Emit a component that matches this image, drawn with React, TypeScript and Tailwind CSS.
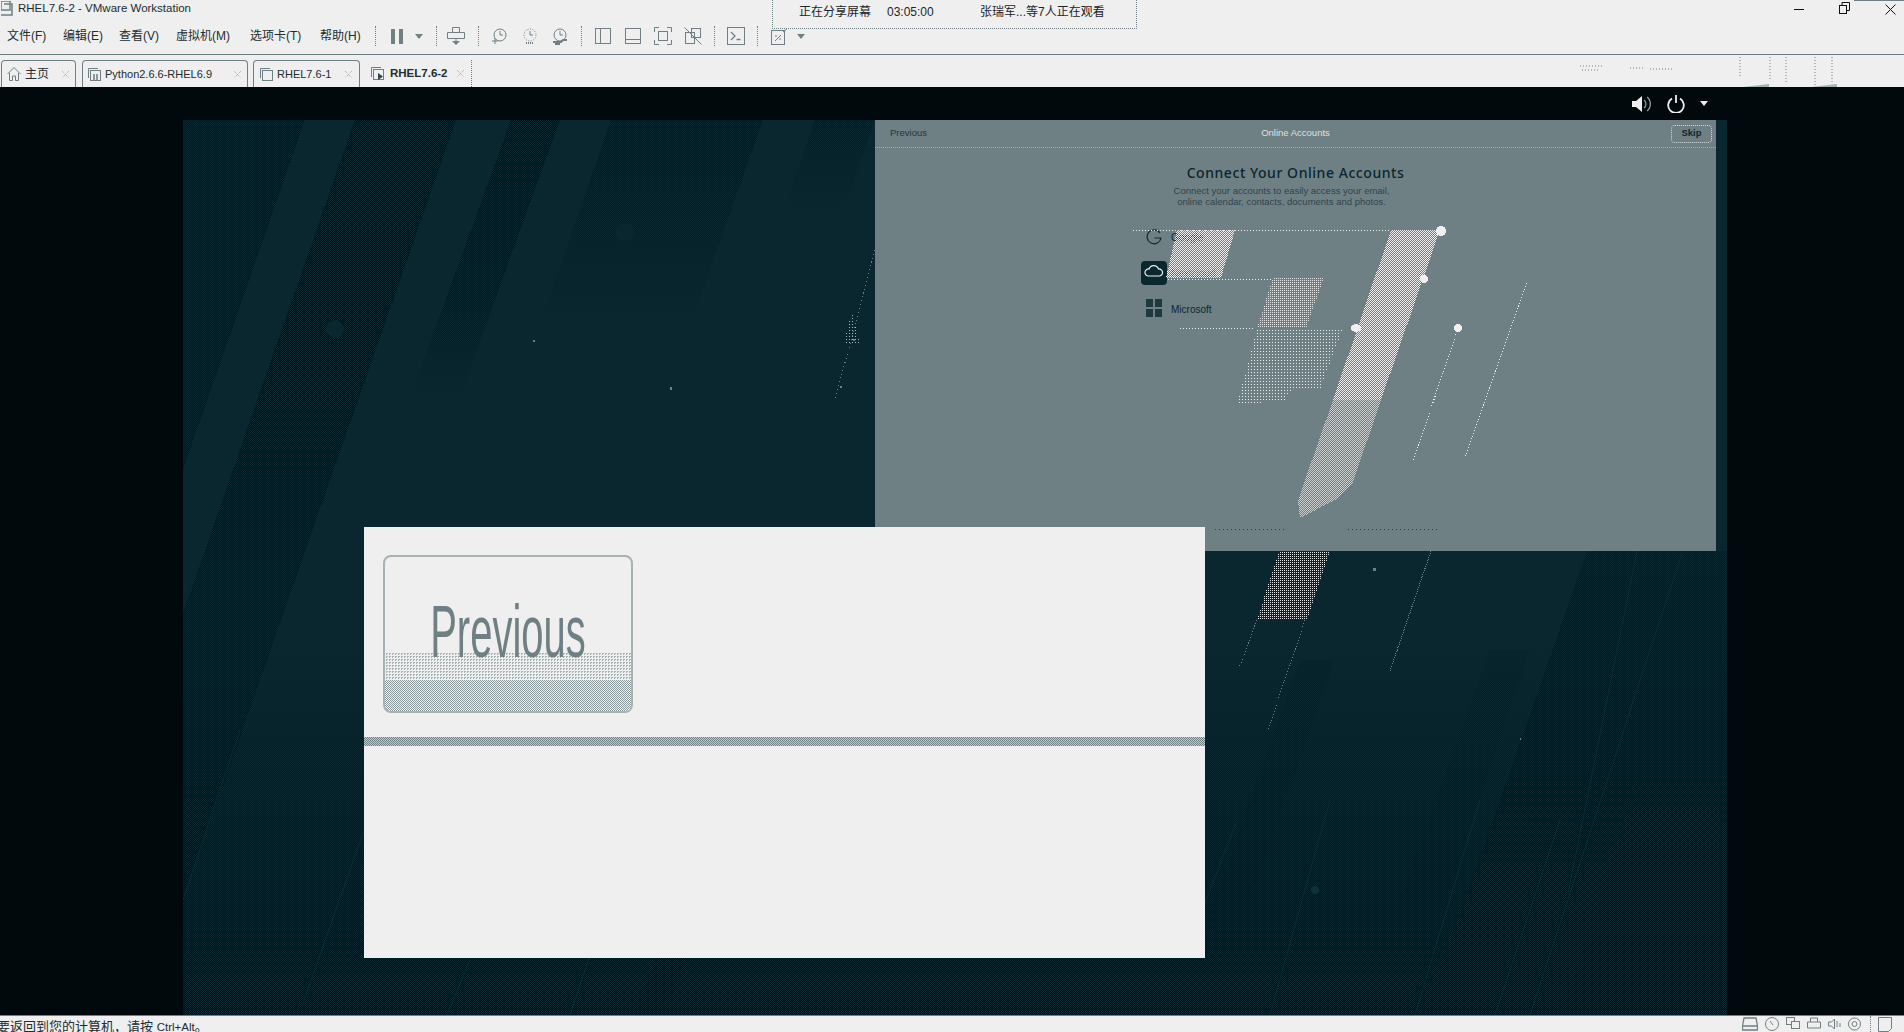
import React from "react";

const stroke = "#6f8084";

const menus = [
  { label: "文件(F)", width: "w-[56px]" },
  { label: "编辑(E)", width: "w-[56px]" },
  { label: "查看(V)", width: "w-[57px]" },
  { label: "虚拟机(M)", width: "w-[74px]" },
  { label: "选项卡(T)", width: "w-[70px]" },
  { label: "帮助(H)", width: "w-[55px]" },
];

const Sep = () => <div className="h-[20px] w-0 border-l border-dotted border-[#6f8084]" />;

const Caret = ({ color = stroke }: { color?: string }) => (
  <svg width="8" height="5" viewBox="0 0 8 5">
    <path d="M0 0h8L4 5z" fill={color} />
  </svg>
);

const Icon = ({ w = 18, h = 18, children }: { w?: number; h?: number; children: React.ReactNode }) => (
  <svg width={w} height={h} viewBox={`0 0 ${w} ${h}`} fill="none" stroke={stroke} strokeWidth="1" className="shrink-0">
    {children}
  </svg>
);

const Clock = ({ dashed = false, wrench = false }: { dashed?: boolean; wrench?: boolean }) => (
  <Icon w={16} h={17}>
    <circle cx="8" cy="7" r="6" strokeDasharray={dashed ? "1 1.5" : undefined} />
    <path d="M8 3v4h3" />
    {wrench ? <path d="M1 14h8l2-2h4M3 16h5" strokeWidth="2" /> : null}
    {!wrench && !dashed ? <path d="M0 13h6M3 10v6" /> : null}
    {dashed ? <path d="M4 15h8" strokeDasharray="1 1" strokeWidth="2" /> : null}
  </Icon>
);

const TabClose = () => (
  <svg width="9" height="9" viewBox="0 0 9 9" className="shrink-0" stroke="#9aa6a9" strokeDasharray="1 1">
    <path d="M1 1l7 7M8 1L1 8" />
  </svg>
);

// small window-stack glyph used on the vm tabs
const VmGlyph = ({ mark }: { mark?: "bars" | "play" }) => (
  <Icon w={15} h={15}>
    <path d="M1.5 11V1.5H11" />
    <rect x="3.5" y="3.5" width="10" height="10" />
    {mark === "bars" ? <path d="M7 7v6M10 7v6" strokeWidth="1.5" /> : null}
    {mark === "play" ? <path d="M8 7l5 3.5L8 14z" fill="#33464c" stroke="none" /> : null}
  </Icon>
);

const Wallpaper = () => (
  <svg className="absolute inset-0" width="1544" height="895" viewBox="183 120 1544 895" shapeRendering="crispEdges">
    <defs>
      <pattern id="checker" width="2" height="2" patternUnits="userSpaceOnUse">
        <rect width="1" height="1" fill="#0a262e" />
        <rect x="1" y="1" width="1" height="1" fill="#0a262e" />
      </pattern>
      <linearGradient id="g1" gradientUnits="userSpaceOnUse" x1="0" y1="120" x2="0" y2="1015">
        <stop offset="0" stopColor="#01090d" stopOpacity="0.9" />
        <stop offset="0.25" stopColor="#01090d" stopOpacity="1" />
        <stop offset="0.55" stopColor="#01090d" stopOpacity="0.55" />
        <stop offset="1" stopColor="#01090d" stopOpacity="0.85" />
      </linearGradient>
      <linearGradient id="g2" gradientUnits="userSpaceOnUse" x1="0" y1="120" x2="0" y2="400">
        <stop offset="0" stopColor="#01090d" stopOpacity="0.9" />
        <stop offset="0.6" stopColor="#01090d" stopOpacity="0.6" />
        <stop offset="1" stopColor="#01090d" stopOpacity="0" />
      </linearGradient>
      <linearGradient id="g3" gradientUnits="userSpaceOnUse" x1="0" y1="120" x2="0" y2="330">
        <stop offset="0" stopColor="#01090d" stopOpacity="0.65" />
        <stop offset="1" stopColor="#01090d" stopOpacity="0" />
      </linearGradient>
      <linearGradient id="g4" gradientUnits="userSpaceOnUse" x1="0" y1="120" x2="0" y2="215">
        <stop offset="0" stopColor="#01090d" stopOpacity="0.45" />
        <stop offset="1" stopColor="#01090d" stopOpacity="0" />
      </linearGradient>
      <linearGradient id="rise" gradientUnits="userSpaceOnUse" x1="0" y1="640" x2="0" y2="1015">
        <stop offset="0" stopColor="#01090d" stopOpacity="0" />
        <stop offset="0.6" stopColor="#01090d" stopOpacity="0.6" />
        <stop offset="1" stopColor="#01090d" stopOpacity="1" />
      </linearGradient>
      <linearGradient id="right" gradientUnits="userSpaceOnUse" x1="0" y1="551" x2="0" y2="1015">
        <stop offset="0" stopColor="#01090d" stopOpacity="0.45" />
        <stop offset="1" stopColor="#01090d" stopOpacity="0.9" />
      </linearGradient>
      <linearGradient id="edge" gradientUnits="userSpaceOnUse" x1="183" y1="0" x2="305" y2="0">
        <stop offset="0" stopColor="#01090d" stopOpacity="0.55" />
        <stop offset="1" stopColor="#01090d" stopOpacity="0.7" />
      </linearGradient>
    </defs>
    <rect x="183" y="120" width="1544" height="895" fill="#0a262e" />
    <polygon points="183,120 305,120 183,470" fill="url(#edge)" />
    <polygon points="355,120 456,120 143,1015 43,1015" fill="url(#g1)" />
    <polygon points="511,120 560,120 430,480 380,480" fill="url(#g2)" />
    <polygon points="611,120 763,120 650,440 500,440" fill="url(#g3)" />
    <polygon points="815,120 875,120 830,250 770,250" fill="url(#g4)" />
    <rect x="183" y="600" width="1544" height="415" fill="url(#rise)" />
    <polygon points="1587,551 1727,551 1727,1015 1425,1015" fill="url(#right)" />
    <polygon points="1490,650 1530,650 1445,900 1400,900" fill="#01090d" opacity="0.15" />
    <polygon points="1300,660 1335,660 1250,900 1215,900" fill="#01090d" opacity="0.2" />
    <polygon points="660,950 690,950 665,1015 632,1015" fill="#01090d" opacity="0.85" />
    <polygon points="1640,780 1727,780 1727,1015 1560,1015" fill="#01090d" opacity="0.3" />
    <rect x="183" y="120" width="1544" height="895" fill="url(#checker)" />
    <g stroke="#0d2d36" strokeWidth="1" shapeRendering="auto">
      <path d="M363 833L302 1006" />
      <path d="M1236 823L1205 903" />
      <path d="M1330 800L1270 1015" />
      <path d="M1637 551L1568 893" />
      <path d="M1682 553L1530 1015" />
      <path d="M1480 800L1415 1015" />
      <path d="M1560 820L1495 1015" />
      <path d="M240 730L183 900" />
      <path d="M470 960L447 1015" />
      <path d="M590 955L570 1015" />
    </g>
    <circle cx="1315" cy="890" r="4" fill="#0d3039" />
    <circle cx="625" cy="232" r="9" fill="#0a262e" />
    <circle cx="335" cy="329" r="9" fill="#0a262e" />
    {/* stray bright specks of the capture */}
    <g fill="#6f8084">
      <rect x="853" y="339" width="2" height="2" />
      <rect x="533" y="340" width="2" height="2" />
      <rect x="670" y="387" width="2" height="3" />
      <rect x="840" y="386" width="2" height="2" />
      <rect x="1373" y="568" width="3" height="3" />
      <rect x="1520" y="738" width="1" height="2" />
    </g>
  </svg>
);

// light dither streaks of the shared screen, they lie over the window content
const Streaks = () => (
  <svg
    className="absolute inset-0 pointer-events-none"
    width="1544"
    height="895"
    viewBox="183 120 1544 895"
    shapeRendering="crispEdges"
  >
    <defs>
      <pattern id="lite" width="2" height="2" patternUnits="userSpaceOnUse">
        <rect width="1" height="1" fill="#efefef" />
        <rect x="1" y="1" width="1" height="1" fill="#efefef" />
      </pattern>
      <pattern id="lite3" width="3" height="3" patternUnits="userSpaceOnUse">
        <rect width="1" height="1" fill="#efefef" />
      </pattern>
      <pattern id="lite2" width="2" height="2" patternUnits="userSpaceOnUse">
        <rect width="1" height="1" fill="#dfe3e4" />
      </pattern>
    </defs>
    <polygon points="1391,230 1440,230 1381,400 1333,400" fill="url(#lite)" />
    <polygon points="1333,400 1381,400 1353,482 1335,500 1300,518 1298,500" fill="url(#lite)" opacity="0.7" />
    <polygon points="1177,230 1235,230 1221,278 1166,278" fill="url(#lite)" />
    <polygon points="1273,278 1324,278 1306,328 1257,328" fill="url(#lite2)" />
    <polygon points="1257,330 1342,330 1320,390 1292,390 1285,400 1237,405" fill="url(#lite3)" />
    <polygon points="1279,551 1330,551 1307,620 1257,620" fill="url(#lite2)" />
    <g fill="#efefef">
      <ellipse cx="1441" cy="231" rx="5" ry="5" />
      <ellipse cx="1424" cy="279" rx="4" ry="4" />
      <ellipse cx="1356" cy="328" rx="5" ry="4" />
      <ellipse cx="1458" cy="328" rx="4" ry="4" />
    </g>
    <g stroke="#efefef" strokeWidth="1" strokeDasharray="1 2" fill="none">
      <path d="M1133 230H1391" />
      <path d="M1168 279H1273" />
      <path d="M1180 328H1255" />
      <path d="M1458 328L1413 462" />
      <path d="M1527 283L1465 458" />
      <path d="M1431 551L1390 671" strokeDasharray="1 1" stroke="#6f8084" />
      <path d="M1257 620L1239 668" stroke="#6f8084" />
      <path d="M1305 620L1268 730" stroke="#6f8084" />
      <path d="M875 250L835 400" stroke="#6f8084" strokeDasharray="1 3" />
    </g>
    <polygon points="852,312 860,345 843,345" fill="url(#lite3)" opacity="0.7" />
    <g stroke="#0a262e" strokeWidth="1" strokeDasharray="1 3" opacity="0.7">
      <path d="M1215 529H1285" />
      <path d="M1348 529H1440" />
    </g>
  </svg>
);

const OnlineAccounts = () => (
  <div className="absolute left-[692px] top-0 flex h-[431px] w-[841px] flex-col bg-[#6f8084] text-[#0a262e]">
    <div className="relative flex h-[28px] shrink-0 items-center justify-between border-b border-dotted border-[#a3aeb0] pl-[15px] pr-[4px] text-[9.5px]">
      <span className="opacity-80">Previous</span>
      <span className="absolute left-0 right-0 text-center text-[#dde1e2]">Online Accounts</span>
      <span className="flex h-[18px] w-[41px] items-center justify-center rounded-sm border border-dotted border-[#d5dadb] font-bold">Skip</span>
    </div>
    <div className="mt-[15px] text-center text-[14px] font-medium leading-[20px] tracking-[0.55px] [font-family:'Noto_Sans',sans-serif]">Connect Your Online Accounts</div>
    <div className="mt-[2px] pr-[28px] text-center text-[9.5px] leading-[11px] text-[#0a262e]/70">
      <div>Connect your accounts to easily access your email,</div>
      <div>online calendar, contacts, documents and photos.</div>
    </div>
    <div className="ml-[261px] mt-[12px] flex flex-col text-[10px]">
      <div className="flex h-[36px] items-center">
        <div className="flex w-[35px] justify-center">
          <svg width="16" height="17" viewBox="0 0 16 17" fill="none" stroke="#0a262e" strokeWidth="1.2">
            <path d="M14 4A7 7 0 1 0 15 9H8.5" />
          </svg>
        </div>
        <span>Google</span>
      </div>
      <div className="flex h-[36px] items-center">
        <div className="flex w-[35px] justify-center">
          <svg width="26" height="24" viewBox="0 0 26 24">
            <rect width="26" height="24" rx="4" fill="#0a262e" />
            <path d="M7 15a3.5 3.5 0 0 1 1-7 5 5 0 0 1 9.500 0 3.500 3.500 0 0 1 1 7z" fill="none" stroke="#efefef" strokeWidth="1.2" />
          </svg>
        </div>
        <span className="opacity-60">Nextcloud</span>
      </div>
      <div className="flex h-[36px] items-center">
        <div className="flex w-[35px] justify-center">
          <svg width="16" height="20" viewBox="0 0 16 20">
            <path d="M0 0h7v8H0zM9 0h7v8H9zM0 10h7v8H0zM9 10h7v8H9z" fill="#0a262e" opacity="0.8" />
          </svg>
        </div>
        <span>Microsoft</span>
      </div>
    </div>
  </div>
);

const PreviousPanel = () => (
  <div className="absolute left-[181px] top-[407px] flex h-[431px] w-[841px] flex-col bg-[#efefef]">
    <div className="h-[210px] shrink-0 pl-[19px] pt-[28px]">
      <div className="relative h-[158px] w-[250px] overflow-hidden rounded-[8px] border-2 border-[#a7b2b4]">
        <div className="absolute bottom-[31px] left-0 right-0 h-[27px] bg-[image:conic-gradient(#a7b2b4_25%,transparent_0)] bg-[size:3px_3px]" />
        <div className="absolute bottom-0 left-0 right-0 h-[31px] bg-[image:repeating-conic-gradient(#8b999c_0_25%,#efefef_0_50%)] bg-[size:2px_2px]" />
        <div className="relative flex h-[112px] items-end justify-center">
          <span className="origin-center scale-x-[0.54] text-[74px] leading-[74px] text-[#6f8084] whitespace-nowrap">Previous</span>
        </div>
      </div>
    </div>
    <div className="h-[9px] shrink-0 bg-[image:repeating-conic-gradient(#6f8084_0_25%,#c4cbcd_0_50%)] bg-[size:2px_2px]" />
  </div>
);

export default function App() {
  return (
    <div className="flex h-[1032px] w-[1904px] flex-col overflow-hidden bg-[#efefef] text-[12px] text-[#222c30] [font-family:'Liberation_Sans','Noto_Sans_CJK_SC',sans-serif]">
      {/* title bar */}
      <div className="relative flex h-[18px] shrink-0 items-center">
        <svg width="15" height="15" viewBox="0 0 15 15" className="ml-[1px] -mt-[2px]" fill="none" stroke={stroke} strokeWidth="1.5">
          <rect x="0" y="0" width="9" height="9" />
          <path d="M3 3h8v11H0" />
        </svg>
        <span className="ml-[2px] -mt-[2px] text-[11.5px] leading-[16px]">RHEL7.6-2 - VMware Workstation</span>
        <div className="ml-auto flex items-center">
          <div className="mr-[35px] h-px w-[10px] bg-[#111]" />
          <svg width="11" height="12" viewBox="0 0 11 12" className="mr-[35px] -mt-[2px]" fill="none" stroke="#111">
            <rect x="0.500" y="3.500" width="7" height="8" />
            <path d="M3 3V0.500h7.500v8H8" />
          </svg>
          <svg width="11" height="11" viewBox="0 0 11 11" className="mr-[8px]" stroke="#111">
            <path d="M0.500 0.500l10 10M10.500 0.500l-10 10" />
          </svg>
        </div>
        <div className="absolute right-0 top-0 h-px w-[50px] bg-[#6f8084]" />
      </div>

      {/* menu + toolbar */}
      <div className="relative flex h-[37px] shrink-0 items-center border-b border-[#6f8084] pl-[7px]">
        {menus.map((m) => (
          <span key={m.label} className={`${m.width} shrink-0`}>
            {m.label}
          </span>
        ))}
        <Sep />
        <svg width="12" height="15" viewBox="0 0 12 15" className="ml-[15px]">
          <path d="M0 0h4v15H0zM8 0h4v15H8z" fill={stroke} />
        </svg>
        <div className="ml-[12px]"><Caret /></div>
        <div className="ml-[13px]"><Sep /></div>
        <div className="ml-[10px]">
          <Icon w={18} h={18}>
            <path d="M5.500 0.500h7v5h-7zM0.500 5.500h17v6h-17zM9 11.500v4" />
            <path d="M5 14h8l-4 4z" fill={stroke} stroke="none" />
          </Icon>
        </div>
        <div className="ml-[13px]"><Sep /></div>
        <div className="ml-[13px]"><Clock /></div>
        <div className="ml-[14px]"><Clock dashed /></div>
        <div className="ml-[14px]"><Clock wrench /></div>
        <div className="ml-[13px]"><Sep /></div>
        <div className="ml-[13px]">
          <Icon w={16} h={16}>
            <rect x="0.500" y="0.500" width="15" height="15" />
            <path d="M5.500 0.500v15" />
          </Icon>
        </div>
        <div className="ml-[14px]">
          <Icon w={16} h={16}>
            <rect x="0.500" y="0.500" width="15" height="15" />
            <path d="M0.500 11.500h15" />
          </Icon>
        </div>
        <div className="ml-[13px]">
          <Icon w={18} h={18}>
            <path d="M0.500 5V0.500H5M13 0.500h4.500V5M17.500 13v4.500H13M5 17.500H0.500V13" />
            <rect x="4.500" y="4.500" width="9" height="9" />
          </Icon>
        </div>
        <div className="ml-[12px]">
          <Icon w={18} h={18}>
            <rect x="1.500" y="5.500" width="9" height="11" />
            <rect x="7.500" y="1.500" width="9" height="9" />
            <path d="M0.500 0.500l17 17" />
          </Icon>
        </div>
        <div className="ml-[12px]"><Sep /></div>
        <div className="ml-[12px]">
          <Icon w={18} h={18}>
            <rect x="0.500" y="0.500" width="17" height="17" />
            <path d="M4 5l4 4-4 4M9.500 12.500h4" strokeWidth="1.300" />
          </Icon>
        </div>
        <div className="ml-[12px]"><Sep /></div>
        <div className="ml-[13px]">
          <Icon w={18} h={18}>
            <rect x="0.500" y="3.500" width="13" height="14" />
            <path d="M4 14l6-6M4 9h2M8 12h2" />
            <path d="M12 5l5-4" />
          </Icon>
        </div>
        <div className="ml-[8px]"><Caret /></div>

        {/* screen-sharing strip, lies over the toolbar */}
        <div className="absolute left-[772px] -top-[18px] flex h-[29px] w-[365px] items-start border-x border-b border-dotted border-[#6f8084] bg-[#efefef] text-[#1c2529]">
          <div className="flex h-[24px] w-full items-center">
            <span className="ml-[26px] w-[88px]">正在分享屏幕</span>
            <span className="w-[93px]">03:05:00</span>
            <span>张瑞军...等7人正在观看</span>
          </div>
        </div>
      </div>

      {/* tabs */}
      <div className="relative flex h-[32px] shrink-0 items-end pl-[1px]">
        <div className="flex h-[27px] w-[75px] shrink-0 items-center rounded-t-[4px] border-x border-t border-[#6f8084] pl-[5px]">
          <svg width="14" height="14" viewBox="0 0 14 14" fill="none" stroke={stroke}>
            <path d="M0.500 7L7 0.500 13.500 7M2.500 6v7.500h3V9h3v4.500h3V6" />
          </svg>
          <span className="ml-[4px] w-[36px]">主页</span>
          <TabClose />
        </div>
        <div className="ml-[6px] flex h-[27px] w-[166px] shrink-0 items-center rounded-t-[4px] border-x border-t border-[#6f8084] pl-[4px] text-[11px]">
          <VmGlyph mark="bars" />
          <span className="ml-[3px] w-[128px]">Python2.6.6-RHEL6.9</span>
          <TabClose />
        </div>
        <div className="ml-[5px] flex h-[27px] w-[107px] shrink-0 items-center rounded-t-[4px] border-x border-t border-[#6f8084] pl-[5px] text-[11px]">
          <VmGlyph />
          <span className="ml-[3px] w-[67px]">RHEL7.6-1</span>
          <TabClose />
        </div>
        <div className="ml-[10px] flex h-[27px] w-[102px] shrink-0 items-center border-r border-dotted border-[#6f8084] text-[11.500px] font-bold">
          <VmGlyph mark="play" />
          <span className="ml-[5px] w-[66px]">RHEL7.6-2</span>
          <TabClose />
        </div>
        {/* capture leftovers at the right end of the tab strip */}
        <svg className="absolute left-[1570px] top-[2px]" width="300" height="32" viewBox="0 0 300 32" fill="none" stroke={stroke} strokeDasharray="1 2">
          <path d="M10 9h24M12 13h18M60 11h14M80 12h12M92 12h12M170 0v20M200 0v24M216 0v26M245 0v28M262 0v26" />
          <path d="M173 30l26-3v3z" fill="#a5b0b2" stroke="none" />
          <path d="M241 30l26-3v3z" fill="#a5b0b2" stroke="none" />
        </svg>
      </div>

      {/* guest screen */}
      <div className="flex min-h-0 flex-1 flex-col bg-[#01090d]">
        <div className="flex h-[33px] shrink-0 items-center justify-end pr-[196px]">
          <svg width="20" height="18" viewBox="0 0 20 18" fill="none">
            <path d="M0 6h4l6-5v16l-6-5H0z" fill="#efefef" />
            <path d="M12 5a5 5 0 0 1 0 8M15 2a9 9 0 0 1 0 14" stroke="#8e9c9f" strokeWidth="1.300" />
          </svg>
          <svg width="18" height="18" viewBox="0 0 18 18" fill="none" stroke="#efefef" strokeWidth="1.800" className="ml-[15px]">
            <path d="M5 3.500a7.800 7.800 0 1 0 8 0M9 0v8" />
          </svg>
          <div className="ml-[15px]"><Caret color="#efefef" /></div>
        </div>
        <div className="relative ml-[183px] h-[895px] w-[1544px] shrink-0 overflow-hidden">
          <Wallpaper />
          <OnlineAccounts />
          <Streaks />
          <PreviousPanel />
        </div>
      </div>

      {/* status bar */}
      <div className="relative flex h-[17px] shrink-0 items-start overflow-hidden border-t border-[#6f8084] bg-[#efefef] text-[13px]">
        <span className="-ml-[3px] mt-[2px] whitespace-nowrap leading-[18px]">
          要返回到您的计算机，请按 <span className="text-[11.5px]">Ctrl+Alt</span>。
        </span>
        <div className="ml-auto flex h-[16px] items-center gap-[7px] pr-[12px]">
          <Icon w={16} h={14}>
            <path d="M2 1h12l1.500 8v4H.500V9zM.500 9h15" strokeWidth="1.300" />
          </Icon>
          <Icon w={14} h={14}>
            <circle cx="7" cy="7" r="6.500" />
            <path d="M5 4l3 4" />
          </Icon>
          <Icon w={14} h={14}>
            <rect x="0.500" y="0.500" width="8" height="7" />
            <rect x="5.500" y="4.500" width="8" height="7" fill="#efefef" />
          </Icon>
          <Icon w={14} h={14}>
            <path d="M3.500 5V1h7v4M.500 5h13v6h-13z" />
          </Icon>
          <Icon w={13} h={14}>
            <path d="M0.500 5h3l3-3v10l-3-3h-3zM9 4v6M12 6v4" />
          </Icon>
          <Icon w={13} h={14}>
            <circle cx="6.500" cy="7" r="6" />
            <circle cx="6.500" cy="7" r="2.500" />
          </Icon>
          <div className="ml-[2px] h-[16px] border-l border-dotted border-[#6f8084]" />
          <Icon w={14} h={15}>
            <path d="M0.500 0.500h13v11l-3 3h-10z" />
          </Icon>
        </div>
      </div>
    </div>
  );
}
